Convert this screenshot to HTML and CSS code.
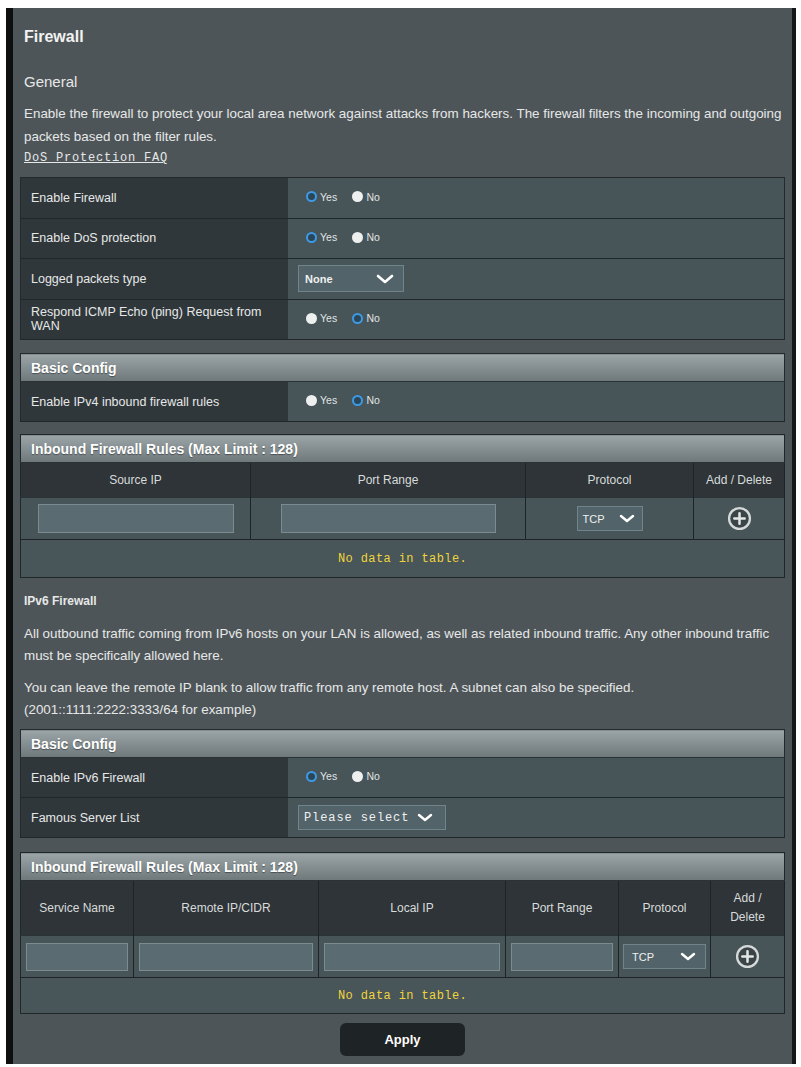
FILE: index.html
```html
<!DOCTYPE html>
<html>
<head>
  <title>Firewall - General</title>
  <link rel="stylesheet" href="styles.css">
</head>
<body>
  <div class="panel">
    <!-- General firewall settings -->
    <div class="title">Firewall</div>
    <div class="subtitle">General</div>
    <p class="desc">Enable the firewall to protect your local area network against attacks from hackers. The firewall filters the incoming and outgoing packets based on the filter rules.</p>
    <a class="faq" href="#">DoS Protection FAQ</a>

    <table class="form-table first">
      <tr>
        <th>Enable Firewall</th>
        <td>
          <label class="radio"><input type="radio" name="fw_enable" checked>Yes</label>
          <label class="radio"><input type="radio" name="fw_enable">No</label>
        </td>
      </tr>
      <tr>
        <th>Enable DoS protection</th>
        <td>
          <label class="radio"><input type="radio" name="fw_dos" checked>Yes</label>
          <label class="radio"><input type="radio" name="fw_dos">No</label>
        </td>
      </tr>
      <tr>
        <th>Logged packets type</th>
        <td>
          <div class="select log-select"><span>None</span>
            <svg width="18" height="10" viewBox="0 0 18 10"><path d="M2 2l7 6 7-6" fill="none" stroke="#fff" stroke-width="2.6" stroke-linecap="round" stroke-linejoin="round"/></svg>
          </div>
        </td>
      </tr>
      <tr>
        <th>Respond ICMP Echo (ping) Request from WAN</th>
        <td>
          <label class="radio"><input type="radio" name="ping_wan">Yes</label>
          <label class="radio"><input type="radio" name="ping_wan" checked>No</label>
        </td>
      </tr>
    </table>

    <table class="form-table">
      <tr><td colspan="2" class="bar">Basic Config</td></tr>
      <tr>
        <th>Enable IPv4 inbound firewall rules</th>
        <td>
          <label class="radio"><input type="radio" name="ipv4_rules">Yes</label>
          <label class="radio"><input type="radio" name="ipv4_rules" checked>No</label>
        </td>
      </tr>
    </table>

    <table class="list-table v4">
      <colgroup>
        <col style="width:230px"><col style="width:275px"><col style="width:168px"><col>
      </colgroup>
      <tr><td colspan="4" class="bar">Inbound Firewall Rules (Max Limit : 128)</td></tr>
      <tr class="col-head">
        <th>Source IP</th>
        <th>Port Range</th>
        <th>Protocol</th>
        <th>Add / Delete</th>
      </tr>
      <tr class="input-row">
        <td><input type="text" class="text-input src-ip"></td>
        <td><input type="text" class="text-input port-range"></td>
        <td>
          <div class="select proto-select"><span>TCP</span>
            <svg width="16" height="9" viewBox="0 0 16 9"><path d="M2 2l6 5 6-5" fill="none" stroke="#fff" stroke-width="2.4" stroke-linecap="round" stroke-linejoin="round"/></svg>
          </div>
        </td>
        <td>
          <svg class="add-btn" width="25" height="25" viewBox="0 0 24 24"><circle cx="12" cy="12" r="10" fill="#3b4548" stroke="#d6d9da" stroke-width="2.2"/><path d="M12 7v10M7 12h10" stroke="#e4e6e6" stroke-width="2.4" stroke-linecap="round"/></svg>
        </td>
      </tr>
      <tr><td colspan="4" class="empty">No data in table.</td></tr>
    </table>

    <!-- IPv6 firewall -->
    <div class="section-title">IPv6 Firewall</div>
    <p class="note">All outbound traffic coming from IPv6 hosts on your LAN is allowed, as well as related inbound traffic. Any other inbound traffic must be specifically allowed here.</p>
    <p class="note second">You can leave the remote IP blank to allow traffic from any remote host. A subnet can also be specified.<br>(2001::1111:2222:3333/64 for example)</p>

    <table class="form-table v6">
      <tr><td colspan="2" class="bar">Basic Config</td></tr>
      <tr>
        <th>Enable IPv6 Firewall</th>
        <td>
          <label class="radio"><input type="radio" name="ipv6_fw" checked>Yes</label>
          <label class="radio"><input type="radio" name="ipv6_fw">No</label>
        </td>
      </tr>
      <tr>
        <th>Famous Server List</th>
        <td>
          <div class="select server-select"><span>Please select</span>
            <svg width="16" height="9" viewBox="0 0 16 9"><path d="M2 2l6 5 6-5" fill="none" stroke="#fff" stroke-width="2.4" stroke-linecap="round" stroke-linejoin="round"/></svg>
          </div>
        </td>
      </tr>
    </table>

    <table class="list-table v6-rules">
      <colgroup>
        <col style="width:113px"><col style="width:185px"><col style="width:187px"><col style="width:113px"><col style="width:92px"><col>
      </colgroup>
      <tr><td colspan="6" class="bar">Inbound Firewall Rules (Max Limit : 128)</td></tr>
      <tr class="col-head tall">
        <th>Service Name</th>
        <th>Remote IP/CIDR</th>
        <th>Local IP</th>
        <th>Port Range</th>
        <th>Protocol</th>
        <th>Add / Delete</th>
      </tr>
      <tr class="input-row">
        <td><input type="text" class="text-input rule-input"></td>
        <td><input type="text" class="text-input rule-input"></td>
        <td><input type="text" class="text-input rule-input"></td>
        <td><input type="text" class="text-input rule-input"></td>
        <td>
          <div class="select proto-select wide"><span>TCP</span>
            <svg width="16" height="9" viewBox="0 0 16 9"><path d="M2 2l6 5 6-5" fill="none" stroke="#fff" stroke-width="2.4" stroke-linecap="round" stroke-linejoin="round"/></svg>
          </div>
        </td>
        <td>
          <svg class="add-btn" width="25" height="25" viewBox="0 0 24 24"><circle cx="12" cy="12" r="10" fill="#3b4548" stroke="#d6d9da" stroke-width="2.2"/><path d="M12 7v10M7 12h10" stroke="#e4e6e6" stroke-width="2.4" stroke-linecap="round"/></svg>
        </td>
      </tr>
      <tr><td colspan="6" class="empty">No data in table.</td></tr>
    </table>

    <div class="apply-row">
      <button class="apply">Apply</button>
    </div>
  </div>
</body>
</html>
```

FILE: styles.css
```css
/* Router settings page */
body {
  margin: 0;
  background: #fff;
  font-family: "Liberation Sans", Arial, sans-serif;
  color: #e6e8e8;
}
.panel {
  margin: 8px 5px 4px 6px;
  padding: 19px 7px 8px;
  background: #4e5558;
  border-left: 7px solid #0e0f0f;
  border-right: 4px solid #161718;
}
.title {
  margin: 0 4px;
  font-size: 16px;
  font-weight: bold;
  line-height: 20px;
  color: #f2f2f2;
}
.subtitle {
  margin: 25px 4px 0;
  font-size: 15px;
  line-height: 20px;
}
.desc {
  margin: 10px 0 0 4px;
  font-size: 13.4px;
  line-height: 23px;
}
.faq {
  display: block;
  margin: 0 4px;
  font-family: "Liberation Mono", monospace;
  font-size: 12px;
  letter-spacing: 0.8px;
  line-height: 20px;
  color: #e6e8e8;
}

/* two column settings tables */
.form-table {
  width: 100%;
  margin-top: 13px;
  border-collapse: collapse;
  border: 1px solid #222a2d;
}
.form-table.first {
  margin-top: 9px;
}
.form-table th {
  width: 247px;
  height: 39px;
  padding: 0 10px;
  background: #30373a;
  border-bottom: 1px solid #20272a;
  text-align: left;
  font-weight: normal;
  font-size: 12.5px;
  line-height: 14px;
}
.form-table td {
  height: 39px;
  padding: 0 10px;
  background: #475559;
  border-bottom: 1px solid #20272a;
  font-size: 12px;
}
.form-table.first th,
.form-table.first td {
  height: 39.5px;
}
.form-table td.bar,
.list-table td.bar {
  height: 27px;
  padding: 0 10px;
  background: linear-gradient(#9ba4a7, #6e787b);
  border-bottom: 1px solid #2a3235;
  color: #fff;
  font-weight: bold;
  font-size: 14px;
  text-align: left;
  text-shadow: 0 1px 1px rgba(0, 0, 0, 0.4);
}

/* radios */
.radio {
  display: inline-flex;
  align-items: center;
  margin-right: 12px;
  font-size: 10.5px;
  color: #e0e4e4;
}
.radio:first-child {
  margin-left: 8px;
}
.radio input {
  appearance: none;
  width: 11px;
  height: 11px;
  margin: 0 3px 0 0;
  border-radius: 50%;
  background: #eef0f0;
}
.radio input:checked {
  background: #2b4656;
  border: 2px solid #3d9ae6;
}

/* dropdown look-alikes */
.select {
  display: inline-flex;
  align-items: center;
  justify-content: space-between;
  box-sizing: border-box;
  background: #52646a;
  border: 1px solid #71848a;
  color: #f0f0f0;
  font-size: 11px;
}
.log-select {
  width: 106px;
  height: 27px;
  padding: 0 9px 0 6px;
  font-weight: bold;
}
.server-select {
  width: 148px;
  height: 25px;
  padding: 0 12px 0 5px;
  font-family: "Liberation Mono", monospace;
  font-size: 12px;
  letter-spacing: 0.9px;
}
.proto-select {
  width: 66px;
  height: 25px;
  padding: 0 7px 0 5px;
}
.proto-select.wide {
  width: 83px;
  height: 25px;
  padding: 0 9px 0 8px;
}

/* rule list tables */
.list-table {
  width: 100%;
  margin-top: 12px;
  border-collapse: collapse;
  table-layout: fixed;
  border: 1px solid #20272a;
}
.list-table.v6-rules {
  margin-top: 14px;
}
.col-head th {
  height: 34px;
  padding: 0 6px;
  background: #2e3437;
  border-right: 1px solid #1d2326;
  font-weight: normal;
  font-size: 12px;
  line-height: 19px;
  color: #d8dbdb;
}
.col-head.tall th {
  height: 54px;
}
.input-row td {
  height: 41px;
  padding: 0;
  background: #475559;
  border-right: 1px solid #1d2326;
  border-top: 1px solid #2a3336;
  text-align: center;
}
.text-input {
  box-sizing: border-box;
  height: 29px;
  vertical-align: middle;
  background: #5a6b71;
  border: 1px solid #7b8c91;
}
.src-ip {
  width: 196px;
}
.port-range {
  width: 215px;
}
.rule-input {
  width: calc(100% - 10px);
  height: 28px;
}
.add-btn {
  vertical-align: middle;
}
.list-table td.empty {
  height: 35px;
  background: #485559;
  border-top: 1px solid #1d2326;
  text-align: center;
  font-family: "Liberation Mono", monospace;
  font-size: 12px;
  letter-spacing: 0.4px;
  color: #f0d43c;
}
.v6-rules td.empty {
  height: 33px;
}

/* IPv6 section text */
.section-title {
  margin: 13px 4px 0;
  font-size: 12px;
  font-weight: bold;
  line-height: 20px;
}
.note {
  margin: 12px 0 0 4px;
  font-size: 13.4px;
  line-height: 22px;
}
.note.second {
  margin-top: 10px;
}
.form-table.v6 {
  margin-top: 8px;
}

.apply-row {
  margin-top: 9px;
  text-align: center;
}
.apply {
  width: 125px;
  height: 33px;
  background: #1e2325;
  border: none;
  border-radius: 6px;
  color: #fff;
  font-family: "Liberation Sans", Arial, sans-serif;
  font-size: 13px;
  font-weight: bold;
  cursor: pointer;
}
```
